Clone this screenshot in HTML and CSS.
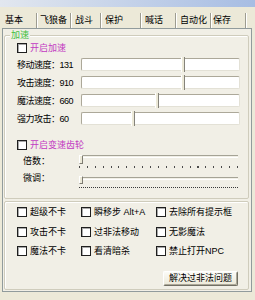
FILE: index.html
```html
<!DOCTYPE html>
<html lang="zh-CN">
<head>
    <meta charset="UTF-8">
    <title>基本</title>
    <link rel="stylesheet" href="styles.css">
</head>
<body>

    <div class="titlebar"></div>

    <div class="tabs">
        <div class="tab active">基本</div>
        <div class="tab">飞狼备</div>
        <div class="tab">战斗</div>
        <div class="tab">保护</div>
        <div class="tab">喊话</div>
        <div class="tab">自动化</div>
        <div class="tab">保存</div>
    </div>

    <div class="panel">

        <!-- speed group -->
        <div class="group group-speed">
            <span class="group-title">加速</span>

            <label class="check accent"><span class="box"></span>开启加速</label>

            <div class="slider-row">
                <span class="slider-label">移动速度：131</span>
                <div class="track"><span class="thumb" style="left: 99px"></span></div>
            </div>
            <div class="slider-row">
                <span class="slider-label">攻击速度：910</span>
                <div class="track"><span class="thumb" style="left: 99px"></span></div>
            </div>
            <div class="slider-row">
                <span class="slider-label">魔法速度：660</span>
                <div class="track"><span class="thumb" style="left: 73px"></span></div>
            </div>
            <div class="slider-row">
                <span class="slider-label">强力攻击：60</span>
                <div class="track"><span class="thumb" style="left: 49px"></span></div>
            </div>

            <label class="check accent gear-check"><span class="box"></span>开启变速齿轮</label>

            <div class="gear-row gear-coarse">
                <span class="gear-label">倍数：</span>
                <div class="gear">
                    <span class="gear-line"></span>
                    <span class="gear-thumb"></span>
                    <span class="ticks"></span>
                </div>
            </div>
            <div class="gear-row gear-fine">
                <span class="gear-label">微调：</span>
                <div class="gear">
                    <span class="gear-line"></span>
                    <span class="gear-thumb"></span>
                    <span class="ticks"></span>
                </div>
            </div>
        </div>

        <!-- options group -->
        <div class="group group-options">
            <div class="options">
                <label class="check"><span class="box"></span>超级不卡</label>
                <label class="check"><span class="box"></span>瞬移步 Alt+A</label>
                <label class="check"><span class="box"></span>去除所有提示框</label>
                <label class="check"><span class="box"></span>攻击不卡</label>
                <label class="check"><span class="box"></span>过非法移动</label>
                <label class="check"><span class="box"></span>无影魔法</label>
                <label class="check"><span class="box"></span>魔法不卡</label>
                <label class="check"><span class="box"></span>看清暗杀</label>
                <label class="check"><span class="box"></span>禁止打开NPC</label>
            </div>
            <div class="actions">
                <button class="btn">解决过非法问题</button>
            </div>
        </div>

    </div>

</body>
</html>
```

FILE: styles.css
```css
body {
    margin: 0;
    width: 255px;
    height: 300px;
    overflow: hidden;
    background-color: #ece9d8;
    font-family: "Liberation Sans", "Noto Sans CJK SC", sans-serif;
    font-size: 9px;
    line-height: 12px;
    color: #000;
}

.titlebar {
    height: 7px;
    background: linear-gradient(to right, #e2e7ef, #a7bde3);
}

/* tabs */
.tabs {
    display: flex;
    align-items: flex-end;
    height: 21px;
    padding-left: 3px;
}

.tab {
    box-sizing: border-box;
    height: 15px;
    line-height: 15px;
    padding-left: 3px;
    border-right: 1px solid #9d9c90;
    box-shadow: 1px 0 0 #fff;
    white-space: nowrap;
}

.tab:nth-child(1) { width: 34px; padding-left: 2px; }
.tab:nth-child(2) { width: 34px; }
.tab:nth-child(3) { width: 30px; padding-left: 4px; }
.tab:nth-child(4) { width: 40px; padding-left: 4px; }
.tab:nth-child(5) { width: 35px; padding-left: 4px; }
.tab:nth-child(6) { width: 35px; padding-left: 4px; }
.tab:nth-child(7) { width: 35px; padding-left: 2px; }

/* panel */
.panel {
    box-sizing: border-box;
    height: 264px;
    margin: 0 3px 0 2px;
    padding: 0 2px 0 1px;
    border: 1px solid #919b9c;
    background-color: #f1efe6;
}

.group {
    position: relative;
    box-sizing: border-box;
    border: 1px solid #cfccbc;
    border-radius: 2px;
    box-shadow: inset 1px 1px 0 #fff;
}

.group-title {
    position: absolute;
    top: -6px;
    left: 5px;
    padding: 0 1px;
    line-height: 11px;
    background-color: #f1efe6;
    color: #3fbf3f;
}

.group-speed {
    height: 164px;
    margin-top: 6px;
    padding: 6px 0 0 12px;
}

.group-options {
    height: 89px;
    margin-top: 2px;
    padding: 4px 0 0 12px;
}

/* checkboxes */
.check {
    display: flex;
    align-items: center;
    gap: 3px;
    height: 12px;
    white-space: nowrap;
}

.box {
    box-sizing: border-box;
    width: 10px;
    height: 10px;
    border: 1px solid #1f1f1f;
    background-color: #fff;
    box-shadow: inset 1px 1px 0 #a9a9a9;
    flex-shrink: 0;
}

.accent {
    color: #c23ac2;
}

/* speed sliders */
.slider-row {
    display: flex;
    align-items: center;
    height: 13px;
    margin-top: 5px;
}

.check + .slider-row {
    margin-top: 4px;
}

.slider-label {
    width: 64px;
    letter-spacing: -0.5px;
    white-space: nowrap;
}

.track {
    position: relative;
    box-sizing: border-box;
    width: 159px;
    height: 13px;
    background-color: #fff;
    border: 1px solid;
    border-color: #aca899 #e3e1d6 #e3e1d6 #aca899;
    border-radius: 2px;
}

.thumb {
    position: absolute;
    top: -2px;
    width: 2px;
    height: 15px;
    border-left: 1px solid #fff;
    border-right: 1px solid #85837a;
    background-color: #ece9d8;
}

.gear-check {
    margin-top: 14px;
}

/* gear sliders */
.gear-row {
    display: flex;
}

.gear-label {
    width: 56px;
    padding-left: 6px;
    white-space: nowrap;
}

.gear {
    position: relative;
    width: 159px;
}

.gear-line {
    position: absolute;
    left: 1px;
    right: 0;
    height: 1px;
    border-top: 1px solid #a5a396;
    border-bottom: 1px solid #fff;
}

.gear-thumb {
    position: absolute;
    left: 0;
    box-sizing: border-box;
    width: 4px;
    border: 1px solid;
    border-color: #fff #7e7c72 #7e7c72 #fff;
    background-color: #ece9d8;
}

.ticks {
    position: absolute;
    left: 0;
    right: 0;
}

.gear-coarse {
    height: 17px;
    margin-top: 2px;
}

.gear-coarse .gear-label {
    margin-top: 2px;
}

.gear-coarse .gear-line { top: 2px; }
.gear-coarse .gear-thumb { top: 2px; height: 9px; }

.gear-coarse .ticks {
    top: 13px;
    height: 2px;
    background: repeating-linear-gradient(to right, #4a4a4a 0 1px, transparent 1px 7.9px);
}

.gear-fine {
    height: 20px;
}

.gear-fine .gear-label {
    margin-top: 2px;
}

.gear-fine .gear-line { top: 7px; }
.gear-fine .gear-thumb { top: 6px; height: 8px; }

.gear-fine .ticks {
    top: 17px;
    height: 1px;
    background: repeating-linear-gradient(to right, #3a3a3a 0 1px, transparent 1px 2px);
}

/* options */
.options {
    display: grid;
    grid-template-columns: 64px 75px auto;
    grid-auto-rows: 12px;
    row-gap: 7.5px;
}

.actions {
    display: flex;
    justify-content: flex-end;
    margin-top: 14px;
    padding-right: 10px;
}

.btn {
    width: 75px;
    height: 15px;
    padding: 0;
    font: inherit;
    line-height: 13px;
    color: #000;
    background: linear-gradient(#fbfbf7, #ece9d8);
    border: 1px solid;
    border-color: #fff #716f64 #716f64 #fff;
    border-radius: 2px;
    box-shadow: inset -1px -1px 0 #aca899;
}
```
